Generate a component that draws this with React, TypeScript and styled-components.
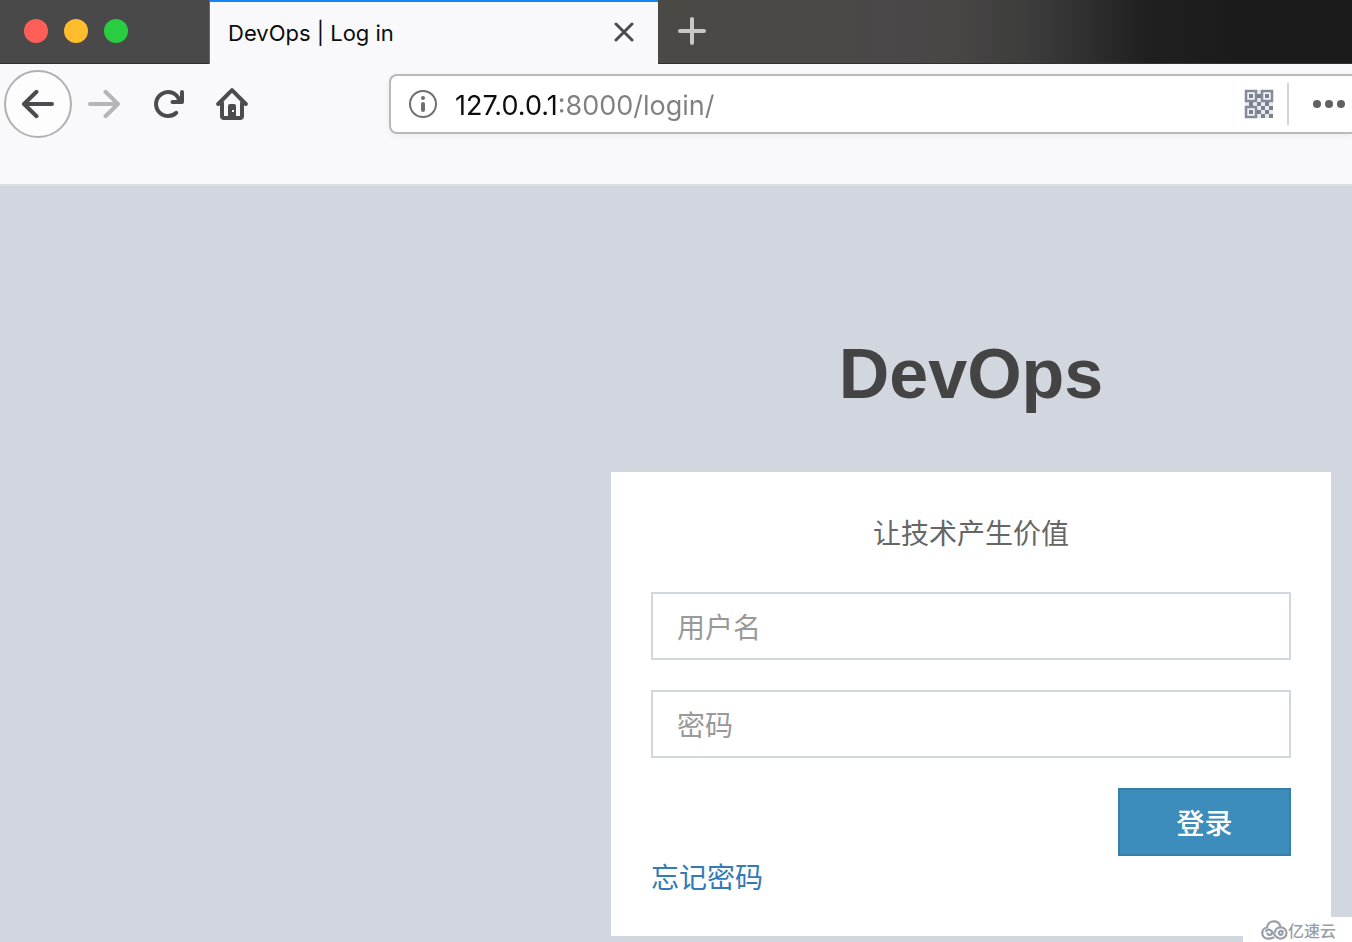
import React from "react";
import styled, { createGlobalStyle } from "styled-components";

const uiFont = `Inter, "Noto Sans CJK SC", sans-serif`;
const headingFont = `"Liberation Sans", sans-serif`;
const pageFont = `"Noto Sans CJK SC", "Liberation Sans", sans-serif`;

const GlobalStyle = createGlobalStyle`
  *, *::before, *::after { box-sizing: border-box; }
  html, body { margin: 0; }
  body { background: #d2d6de; font-family: ${pageFont}; }
  button, input { font: inherit; margin: 0; }
`;

const Screen = styled.div`
  display: flex;
  flex-direction: column;
  min-height: 100vh;
  overflow: hidden;
`;

const TitleBar = styled.header`
  display: flex;
  height: 64px;
  background: linear-gradient(
    90deg,
    #494949 0%,
    #494949 40%,
    #4a4946 50%,
    #4a4946 62%,
    #4b4849 66%,
    #484545 71%,
    #3c3d3c 76%,
    #2d2d2d 81%,
    #1f1f1f 85%,
    #1b1b1c 92%
  );
  box-shadow: inset 0 -1px 0 #33302f;
`;

const WindowControls = styled.div`
  display: flex;
  gap: 16px;
  width: 210px;
  padding: 19px 24px;
  border-right: 1px solid #69696b;
`;

const WindowButton = styled.button<{ $color: string }>`
  width: 24px;
  height: 24px;
  padding: 0;
  border: 0;
  border-radius: 50%;
  background: ${(p) => p.$color};
`;

const Tab = styled.div`
  display: flex;
  align-items: center;
  justify-content: space-between;
  width: 448px;
  padding: 0 20px 0 18px;
  border-top: 2px solid #1784fb;
  background: #f9f9fb;
  font-family: ${uiFont};
  font-size: 22px;
  line-height: 28px;
  color: #0c0c0d;
`;

const IconButton = styled.button<{ $width?: number }>`
  display: flex;
  align-items: center;
  justify-content: center;
  flex: none;
  width: ${(p) => p.$width ?? 64}px;
  padding: 0;
  border: 0;
  background: none;
`;

const TabBarButton = styled(IconButton)`
  padding-bottom: 2px;
`;

const MoreButton = styled(IconButton)`
  padding-left: 16px;
`;

const Toolbar = styled.nav`
  display: flex;
  align-items: flex-start;
  height: 122px;
  padding: 6px 0 0 4px;
  border-bottom: 2px solid #dcdee2;
  background: #f9f9fb;
`;

const NavButtons = styled.div`
  display: flex;
  height: 68px;
  width: 385px;
  flex: none;
`;

const BackButton = styled(IconButton)`
  border: 2px solid #b1b1b3;
  border-radius: 50%;
  background: #fdfdfe;
`;

const AddressBar = styled.div`
  display: flex;
  flex: 1;
  align-items: center;
  height: 60px;
  margin-top: 4px;
  padding-left: 18px;
  border: 2px solid #b9b9bc;
  border-right: 0;
  border-radius: 8px 0 0 8px;
  background: #fff;
  box-shadow: 0 2px 6px rgba(0, 0, 0, 0.06);
`;

const AddressInput = styled.input`
  flex: 1;
  min-width: 0;
  height: 40px;
  padding: 2px 0 0;
  margin-left: 18px;
  border: 0;
  outline: 0;
  font-family: ${uiFont};
  font-size: 27px;
  color: #0c0c0d;
  background: linear-gradient(90deg, #0c0c0d 104px, #808080 104px);
  background-clip: text;
  -webkit-background-clip: text;
  -webkit-text-fill-color: transparent;
`;

const Divider = styled.span`
  width: 2px;
  height: 42px;
  margin-left: 13px;
  background: #d4d4d5;
`;

const Page = styled.main`
  display: flex;
  flex: 1;
  justify-content: flex-end;
  padding: 138px 21px 6px;
`;

const LoginColumn = styled.div`
  width: 720px;
  max-width: 100%;
`;

const Logo = styled.h1`
  margin: 0 0 48px;
  font-family: ${headingFont};
  font-size: 70px;
  line-height: 100px;
  font-weight: 700;
  text-align: center;
  color: #444;
`;

const LoginForm = styled.form`
  padding: 40px;
  background: #fff;
  font-size: 28px;
  line-height: 40px;
`;

const Message = styled.p`
  margin: 0 0 40px;
  text-align: center;
  color: #666;
`;

const Field = styled.input`
  display: block;
  width: 100%;
  height: 68px;
  margin-bottom: 30px;
  padding: 0 24px;
  border: 2px solid #d2d6de;
  border-radius: 0;
  background: #fff;
  color: #555;

  &::placeholder {
    color: #999;
    opacity: 1;
  }
`;

const SubmitButton = styled.button`
  display: block;
  width: 173px;
  height: 68px;
  margin-left: auto;
  padding: 0;
  border: 2px solid #367fa9;
  background: #3c8dbc;
  font-weight: 500;
  color: #fff;
`;

const ForgotLink = styled.a`
  display: table;
  color: #337ab7;
  text-decoration: none;
`;

const Watermark = styled.div`
  position: fixed;
  right: 0;
  bottom: 0;
  display: flex;
  align-items: center;
  width: 109px;
  height: 25px;
  padding-left: 18px;
  background: #fff;
  font-size: 16px;
  line-height: 24px;
  font-weight: 500;
  color: #989eaa;
`;

const BackIcon = () => (
  <svg width="34" height="30" viewBox="0 0 34 30" fill="none" stroke="#4c4c4f" strokeWidth="4" strokeLinecap="round" strokeLinejoin="round">
    <path d="M3 15H31M15.5 2.8L3 15L15.5 27.2" />
  </svg>
);

const ForwardIcon = () => (
  <svg width="34" height="30" viewBox="0 0 34 30" fill="none" stroke="#b5b5b7" strokeWidth="4" strokeLinecap="round" strokeLinejoin="round">
    <path d="M3 15H31M18.5 2.8L31 15L18.5 27.2" />
  </svg>
);

const ReloadIcon = () => (
  <svg width="32" height="30" viewBox="0 0 32 30" fill="none" stroke="#4c4c4f" strokeWidth="4" strokeLinecap="round" strokeLinejoin="round">
    <path d="M24.3 23.8A12 12 0 1 1 26.2 8.700" />
    <path d="M30 3V13H20.500" />
    <path d="M30 6L22 13H30Z" fill="#4c4c4f" stroke="none" />
  </svg>
);

const HomeIcon = () => (
  <svg width="32" height="34" viewBox="0 0 32 34" fill="none" stroke="#4c4c4f" strokeWidth="4" strokeLinecap="round" strokeLinejoin="round">
    <path d="M2.2 17L16 3.2L29.8 17" />
    <path d="M6 16V29Q6 31 8 31H24Q26 31 26 29V16" />
    <path fillRule="evenodd" stroke="none" fill="#4c4c4f" d="M14 17H18Q20 17 20 19V31H12V19Q12 17 14 17ZM16 23V25H18V23Z" />
  </svg>
);

const CloseIcon = () => (
  <svg width="20" height="20" viewBox="0 0 20 20" stroke="#4c4c4f" strokeWidth="3" strokeLinecap="round">
    <path d="M2 2L18 18M18 2L2 18" />
  </svg>
);

const PlusIcon = () => (
  <svg width="28" height="28" viewBox="0 0 28 28" stroke="#c9c8c7" strokeWidth="4" strokeLinecap="round">
    <path d="M14 2V26M2 14H26" />
  </svg>
);

const InfoIcon = () => (
  <svg width="28" height="28" viewBox="0 0 28 28" fill="none" stroke="#6f6f71" strokeLinecap="round">
    <circle cx="14" cy="14" r="13" strokeWidth="2" />
    <circle cx="14" cy="8" r="2" fill="#6f6f71" stroke="none" />
    <path d="M14 14V20" strokeWidth="4" />
  </svg>
);

const QrIcon = () => (
  <svg width="30" height="30" viewBox="0 0 30 30">
    <path fill="#e6ebf5" d="M1 1h28v28h-28z" />
    <g fill="#eef2fa" stroke="#858b96" strokeWidth="2.5">
      <rect x="2" y="2" width="10" height="10" />
      <rect x="18" y="2" width="10" height="10" />
      <rect x="2" y="18" width="10" height="10" />
    </g>
    <g fill="#7b8089">
      <path d="M5 5h4v4h-4zM21 5h4v4h-4zM5 21h4v4h-4z" />
      <path d="M13 5h4v4h-4zM5 13h4v4h-4zM13 13h4v4h-4zM21 13h4v4h-4zM17 17h4v4h-4zM25 17h4v4h-4zM13 21h4v4h-4zM21 21h4v4h-4zM17 25h4v4h-4zM25 25h4v4h-4z" />
    </g>
  </svg>
);

const MoreIcon = () => (
  <svg width="32" height="8" viewBox="0 0 32 8" fill="#606062">
    <circle cx="4" cy="4" r="4" />
    <circle cx="16" cy="4" r="4" />
    <circle cx="28" cy="4" r="4" />
  </svg>
);

const CloudIcon = () => (
  <svg width="27" height="20" viewBox="0 0 27 20" fill="none" stroke="#989eaa" strokeWidth="2.2" strokeLinecap="round">
    <path d="M12.500 17.600Q10 18.800 7 18.700C3.500 18.500 1.300 16 1.300 13C1.300 10 3.500 7.800 6 7.500C6.500 3.500 9.500 1.300 12.800 1.300C16 1.300 18.600 3.200 19.300 6.200" />
    <path d="M5 10.800Q8 8.300 10.600 11C13.300 14 14.800 18.700 19.300 18.700C23 18.700 25.500 16 25.500 13C25.500 9.500 22.700 7.300 19.500 7.300C16.200 7.300 14 9.500 14.200 12" />
    <path d="M10.800 12.500C10.800 15.500 6.800 15.800 6.500 13.300M21.800 11.500C19.300 9.700 17 12 18.200 14C19.500 15.600 21.600 14.800 21.500 13.200" />
  </svg>
);

export default function App() {
  return (
    <Screen>
      <GlobalStyle />
      <TitleBar>
        <WindowControls>
          <WindowButton $color="#ff5f57" aria-label="Close window" />
          <WindowButton $color="#ffbd2e" aria-label="Minimize window" />
          <WindowButton $color="#28cd41" aria-label="Zoom window" />
        </WindowControls>
        <Tab>
          <span>DevOps | Log in</span>
          <TabBarButton $width={28} aria-label="Close tab"><CloseIcon /></TabBarButton>
        </Tab>
        <TabBarButton $width={68} aria-label="New tab"><PlusIcon /></TabBarButton>
      </TitleBar>
      <Toolbar>
        <NavButtons>
          <BackButton $width={68} aria-label="Back"><BackIcon /></BackButton>
          <IconButton aria-label="Forward"><ForwardIcon /></IconButton>
          <IconButton aria-label="Reload"><ReloadIcon /></IconButton>
          <IconButton aria-label="Home"><HomeIcon /></IconButton>
        </NavButtons>
        <AddressBar>
          <IconButton $width={28} type="button" aria-label="Site information"><InfoIcon /></IconButton>
          <AddressInput aria-label="Address" defaultValue="127.0.0.1:8000/login/" />
          <IconButton $width={30} type="button" aria-label="QR code"><QrIcon /></IconButton>
          <Divider />
          <MoreButton $width={63} type="button" aria-label="Page actions"><MoreIcon /></MoreButton>
        </AddressBar>
      </Toolbar>
      <Page>
        <LoginColumn>
          <Logo>DevOps</Logo>
          <LoginForm onSubmit={(e) => e.preventDefault()}>
            <Message>让技术产生价值</Message>
            <Field type="text" name="username" placeholder="用户名" aria-label="用户名" />
            <Field type="password" name="password" placeholder="密码" aria-label="密码" />
            <SubmitButton type="submit">登录</SubmitButton>
            <ForgotLink href="#forgot">忘记密码</ForgotLink>
          </LoginForm>
        </LoginColumn>
      </Page>
      <Watermark>
        <CloudIcon />
        <span>亿速云</span>
      </Watermark>
    </Screen>
  );
}
